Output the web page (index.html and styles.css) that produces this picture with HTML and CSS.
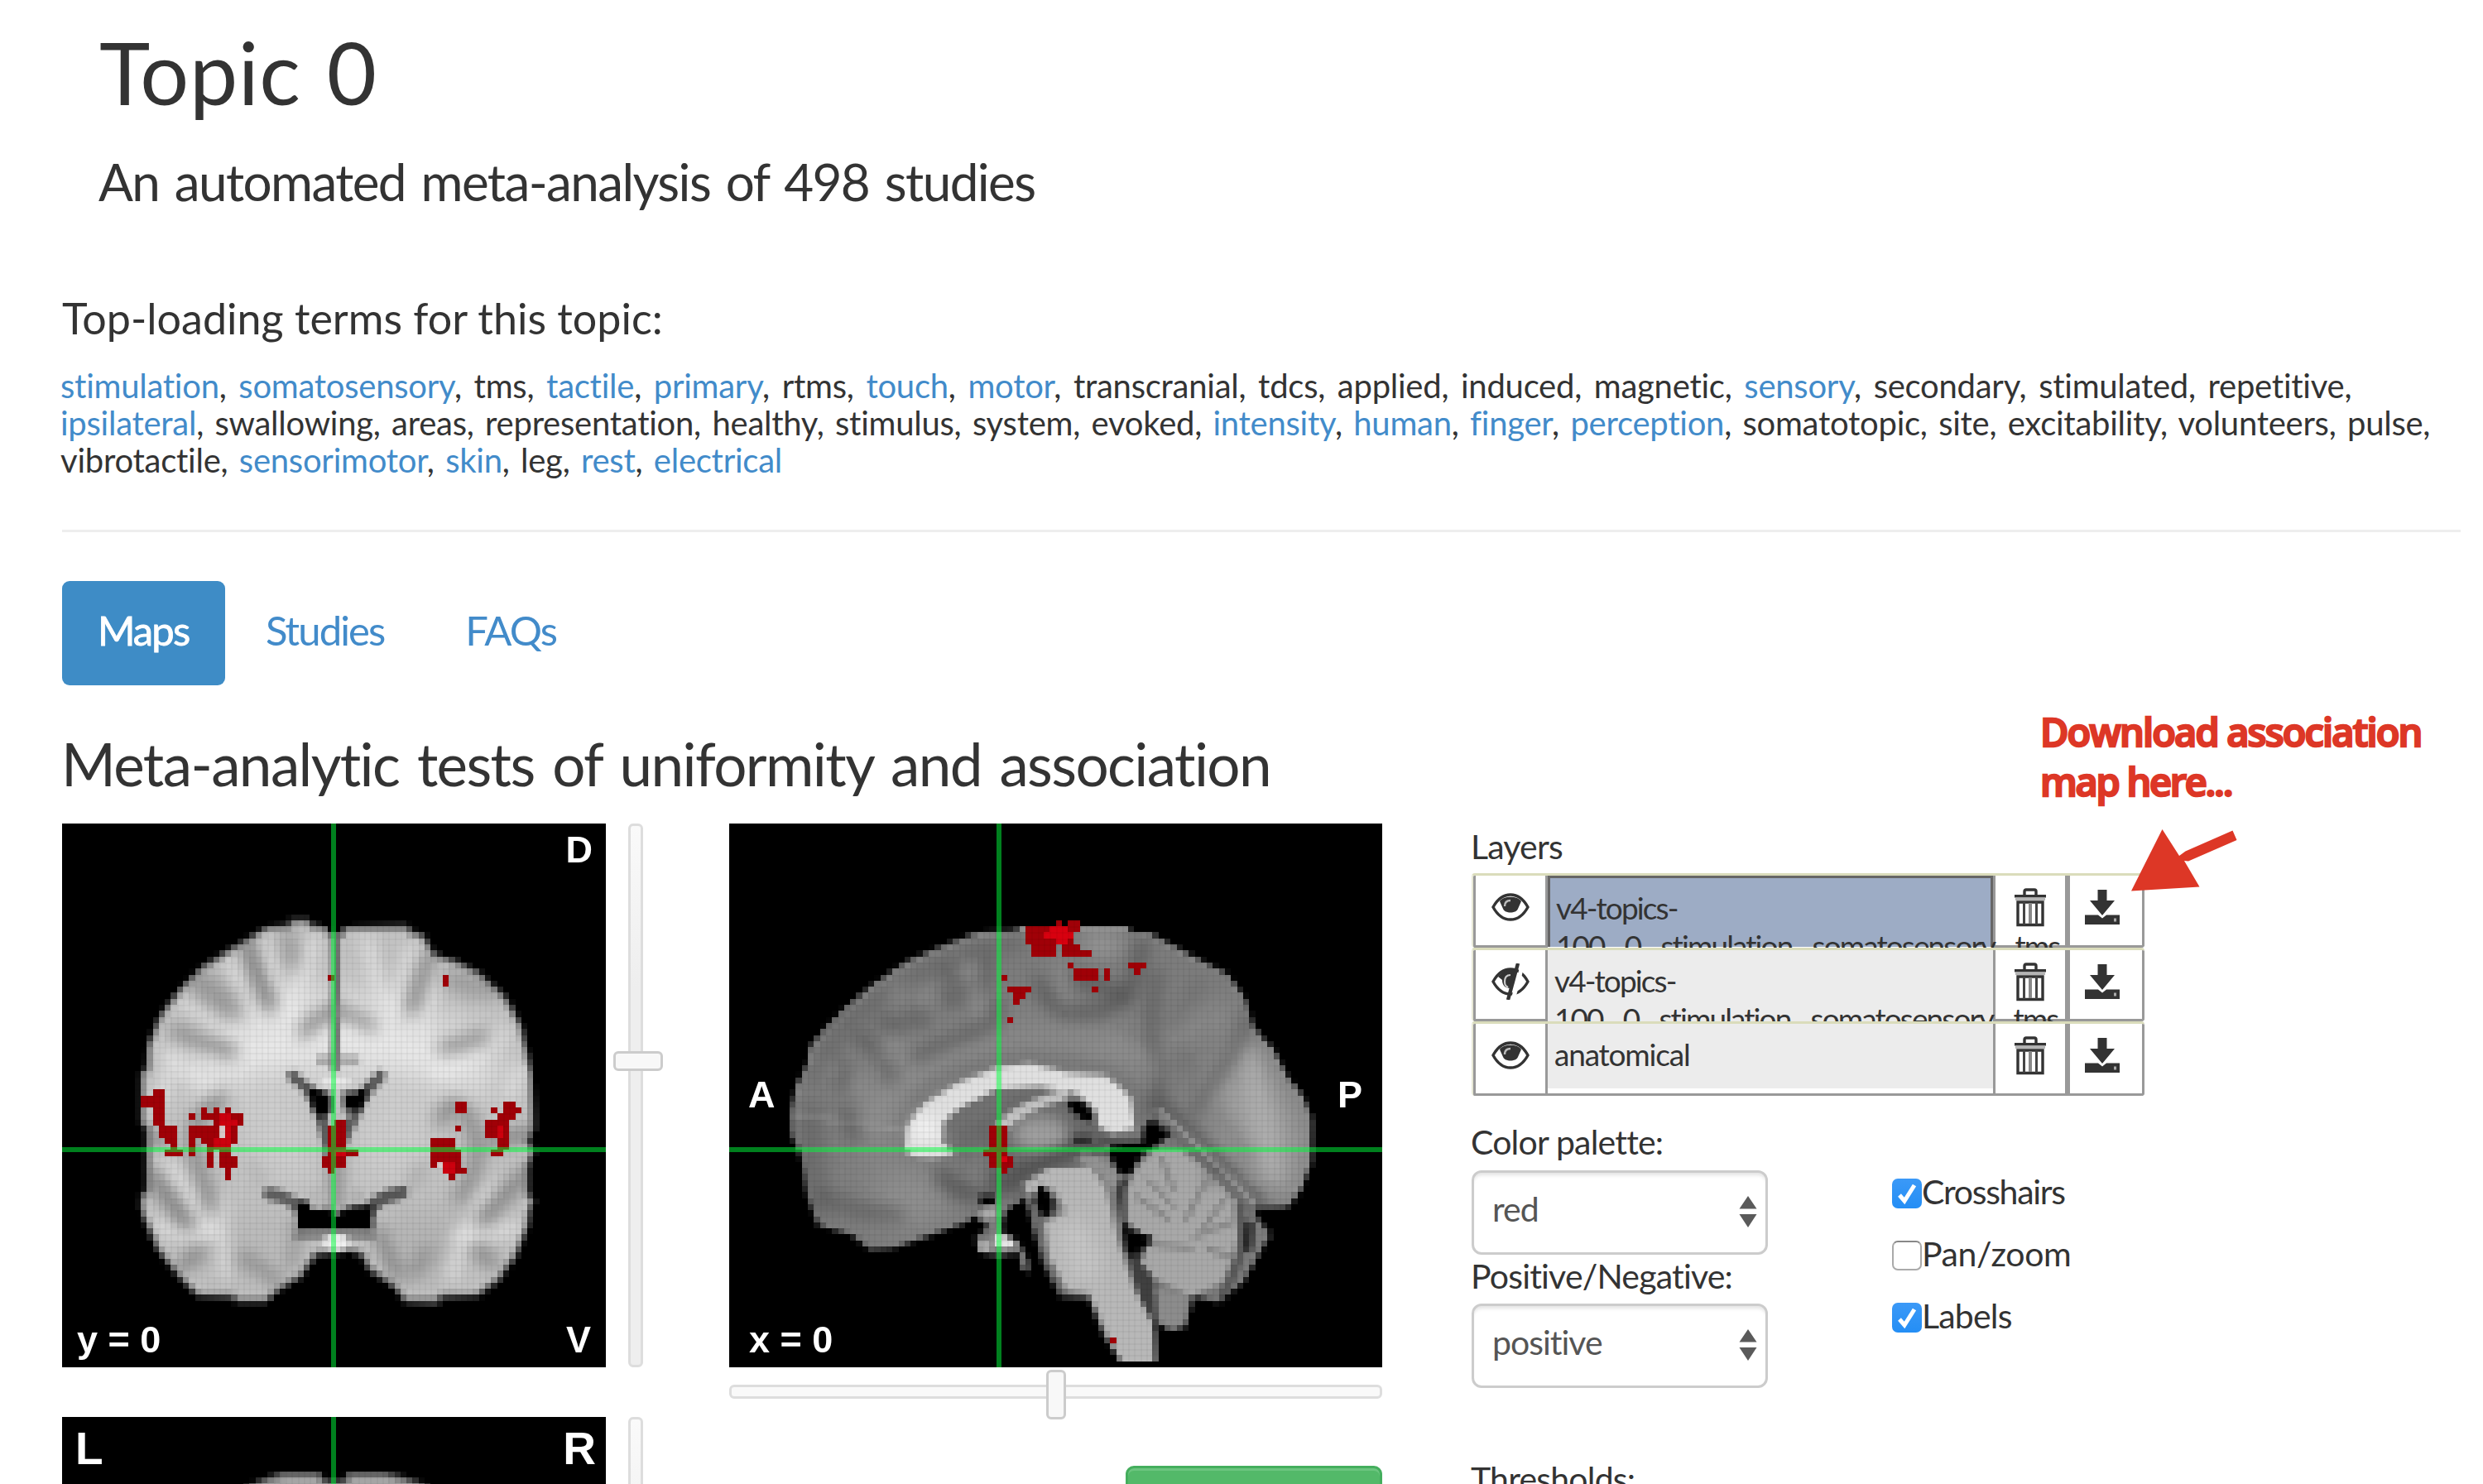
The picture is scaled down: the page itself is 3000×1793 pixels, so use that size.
FILE: index.html
```html
<!DOCTYPE html>
<html lang="en">
<head>
<meta charset="utf-8">
<title>Topic 0</title>
<link rel="stylesheet" href="styles.css">
</head>
<body>
<svg class="sprite" width="0" height="0" aria-hidden="true">
  <symbol id="eye" viewBox="0 0 46 38">
    <path d="M2 19C8 8 15 4 23 4s15 4 21 15C38 30 31 34 23 34S8 30 2 19Z" fill="#fff" stroke="#333" stroke-width="3.4"/>
    <path d="M10 12C14 5 32 5 36 12L32 21C30 27 16 27 14 21Z" fill="#333"/>
    <path d="M23 11c-5 0-7 3-7 7" fill="none" stroke="#bbb" stroke-width="2.4"/>
  </symbol>
  <symbol id="eye-off" viewBox="0 0 46 44">
    <path d="M2 22C8 11 15 7 23 7s15 4 21 15C38 33 31 37 23 37S8 33 2 22Z" fill="#fff" stroke="#333" stroke-width="3.4"/>
    <path d="M8 16C14 8 22 7 30 8L23 30C16 30 13 26 13 20Z" fill="#333"/>
    <path d="M23 14c-5 0-7 3-7 8s2 6 4 7" fill="none" stroke="#ccc" stroke-width="2.2"/>
    <path d="M38 0L26 44" stroke="#fff" stroke-width="5"/>
    <path d="M32 0L20 44" stroke="#333" stroke-width="4.4"/>
  </symbol>
  <symbol id="trash" viewBox="0 0 40 48">
    <path d="M13 10V5q0-2 2-2h10q2 0 2 2v5" fill="none" stroke="#333" stroke-width="3.4"/>
    <path d="M1 9h38v3.5H1z" fill="#333"/><path d="M2 12.500h36v3.500H2z" fill="#b5b5b5"/>
    <path d="M5 18h30v27.500H5z" fill="#fff" stroke="#333" stroke-width="3.400"/>
    <path d="M12.500 18v27M27.500 18v27" stroke="#444" stroke-width="3"/><path d="M20 19v25" stroke="#888" stroke-width="4"/>
  </symbol>
  <symbol id="download" viewBox="0 0 42 42">
    <path d="M15.500 0h11v13h9.500L21 31 6 13h9.500z" fill="#333"/>
    <path d="M0 30.500h16l5 4 5-4h16V42H0z" fill="#333"/>
    <path d="M35 34.500h3v4h-3z" fill="#aaa"/>
  </symbol>
  <symbol id="updown" viewBox="0 0 22 38">
    <path d="M11 0l10.500 15.500H.5zM11 38L.5 22h21z" fill="#5a5a5a"/>
  </symbol>
</svg>

<header class="intro">
  <h1>Topic 0</h1>
  <p class="subtitle">An automated meta-analysis of 498 studies</p>
</header>

<main>
  <section class="terms">
    <h4>Top-loading terms for this topic:</h4>
    <p class="t1"><a>stimulation</a>, <a>somatosensory</a>, tms, <a>tactile</a>, <a>primary</a>, rtms, <a>touch</a>, <a>motor</a>, transcranial, tdcs, applied, induced, magnetic, <a>sensory</a>, secondary, stimulated, repetitive,</p>
    <p class="t2"><a>ipsilateral</a>, swallowing, areas, representation, healthy, stimulus, system, evoked, <a>intensity</a>, <a>human</a>, <a>finger</a>, <a>perception</a>, somatotopic, site, excitability, volunteers, pulse,</p>
    <p class="t2">vibrotactile, <a>sensorimotor</a>, <a>skin</a>, leg, <a>rest</a>, <a>electrical</a></p>
  </section>
  <hr>
  <nav class="tabs">
    <a class="active">Maps</a><a>Studies</a><a>FAQs</a>
  </nav>
  <h2>Meta-analytic tests of uniformity and association</h2>

  <div class="viewer">
    <div class="col-left">
      <div class="slice-row">
        <div class="slice"><canvas id="coronal" width="657" height="657"></canvas>
          <span class="lbl tr">D</span><span class="lbl bl">y = 0</span><span class="lbl br">V</span></div>
        <div class="slider-v"><i></i></div>
      </div>
      <div class="slice-row cut">
        <div class="slice"><canvas id="axial" width="657" height="657"></canvas>
          <span class="lbl big tl">L</span><span class="lbl big tr">R</span></div>
        <div class="slider-v"></div>
      </div>
    </div>

    <div class="col-mid">
      <div class="slice"><canvas id="sagittal" width="789" height="657"></canvas>
        <span class="lbl ml">A</span><span class="lbl mr">P</span><span class="lbl bl">x = 0</span></div>
      <div class="slider-h"><i></i></div>
      <div class="green-btn"></div>
    </div>

    <aside class="controls">
      <div class="field-label">Layers</div>
      <ul class="layers">
        <li class="selected">
          <button><svg class="i-eye"><use href="#eye"/></svg></button>
          <div class="name">v4-topics-<br>100<u>_</u>0<u>_</u>stimulation<u>_</u>somatosensory<u>_</u>tms</div>
          <button><svg class="i-trash"><use href="#trash"/></svg></button>
          <button><svg class="i-down"><use href="#download"/></svg></button>
        </li>
        <li>
          <button><svg class="i-off"><use href="#eye-off"/></svg></button>
          <div class="name">v4-topics-<br>100<u>_</u>0<u>_</u>stimulation<u>_</u>somatosensory<u>_</u>tms</div>
          <button><svg class="i-trash"><use href="#trash"/></svg></button>
          <button><svg class="i-down"><use href="#download"/></svg></button>
        </li>
        <li class="short">
          <button><svg class="i-eye"><use href="#eye"/></svg></button>
          <div class="name">anatomical</div>
          <button><svg class="i-trash"><use href="#trash"/></svg></button>
          <button><svg class="i-down"><use href="#download"/></svg></button>
        </li>
      </ul>
      <div class="options">
        <div class="selects">
          <div class="field-label palette">Color palette:</div>
          <div class="select"><span>red</span><svg><use href="#updown"/></svg></div>
          <div class="field-label sign">Positive/Negative:</div>
          <div class="select"><span>positive</span><svg><use href="#updown"/></svg></div>
        </div>
        <div class="checks">
          <label class="on"><b><svg viewBox="0 0 36 36"><path d="M9 20l6 7L27 8"/></svg></b><span class="w1">Crosshairs</span></label>
          <label><b></b><span class="w2">Pan/zoom</span></label>
          <label class="on"><b><svg viewBox="0 0 36 36"><path d="M9 20l6 7L27 8"/></svg></b><span class="w3">Labels</span></label>
        </div>
      </div>
      <div class="field-label thresholds">Thresholds:</div>
    </aside>
  </div>
</main>

<div class="note">
  <div>Download association</div>
  <div class="second">map here...</div>
  <svg class="arrow" viewBox="0 0 128 76"><path d="M0 74.500L37.500 0 58 32l7.500-5.500L122.500 1.500 127.500 13 69 38.500l-5-.500L82.500 69.500z" fill="#dd3726"/></svg>
</div>
<script src="brain.js"></script>
</body>
</html>
```

FILE: styles.css
```css
* { box-sizing: border-box; }
body {
  margin: 0;
  height: 1793px;
  overflow: hidden;
  position: relative;
  background: #fff;
  color: #333;
  font-family: Lato, "Open Sans", sans-serif;
}
.sprite { position: absolute; }
h1, h2, h4, p, ul { margin: 0; padding: 0; font-weight: 400; }
svg { display: block; overflow: visible; }
a { color: #428bca; }

.intro { padding: 27px 0 0 120px; white-space: nowrap; }
h1 { font-size: 104px; line-height: 120px; letter-spacing: .6px; word-spacing: 4px; }
.subtitle { margin-top: 32px; font-size: 62px; line-height: 80px; letter-spacing: -1.6px; word-spacing: 4.3px; text-indent: -1px; }

main { padding-left: 75px; white-space: nowrap; }
.terms { margin: 95px 0 0 -2px; font-size: 40px; line-height: 45px; }
h4 { font-size: 52px; line-height: 60px; margin: 0 0 30px 2px; }
.t1 { letter-spacing: -.25px; word-spacing: 4.8px; }
.t2 { letter-spacing: -.25px; word-spacing: 3.5px; }
hr { width: 2898px; height: 3px; margin: 61px 0 59px; border: 0; background: #eee; }

.tabs { display: flex; gap: 7px; height: 126px; }
.tabs a { font-size: 49px; line-height: 119px; letter-spacing: -1.9px; padding: 0 49px 7px 42px; border-radius: 9px; }
.tabs a.active { width: 197px; padding-right: 0; padding-left: 43px; color: #fff; background: #3e8cc6; -webkit-text-stroke: .8px #fff; }
h2 { margin-top: 55px; font-size: 71px; line-height: 80px; letter-spacing: -1.6px; word-spacing: 5px; text-indent: -1px; }

.viewer { display: flex; margin-top: 32px; height: 798px; overflow: hidden; }
.col-left { width: 806px; display: flex; flex-direction: column; gap: 60px; }
.slice-row { display: flex; gap: 27px; }
.slice-row.cut { height: 81px; overflow: hidden; }
.slice { position: relative; }
.slice canvas { display: block; background: #000; }
.lbl { position: absolute; color: #fff; font: bold 45px/50px "Liberation Sans", sans-serif; letter-spacing: 0; }
.lbl.big { font-size: 55px; line-height: 60px; }
.tr { top: 7px; right: 16px; }
.big.tr { top: 8px; right: 12px; }
.tl { top: 8px; left: 16px; }
.bl { bottom: 8px; left: 18px; }
.col-mid .bl { left: 24px; }
.br { bottom: 8px; right: 18px; }
.ml { top: 303px; left: 23px; }
.mr { top: 303px; right: 24px; }
.slider-v { flex: none; width: 18px; height: 657px; display: flex; justify-content: center; align-items: flex-start; border: 3px solid #ddd; border-radius: 6px; background: linear-gradient(#fafafa, #eee 30%); }
.slider-v i { flex: none; width: 60px; height: 24px; margin: 272px -6px 0 0; }
.slider-h { margin-top: 21px; height: 17px; display: flex; align-items: center; border: 3px solid #ddd; border-radius: 6px; background: #f9f9f9; }
.slider-h i { flex: none; width: 24px; height: 60px; margin: 6px 0 0 380px; }
.slider-v i, .slider-h i { border: 3px solid #ccc; border-radius: 6px; background: #f8f8f8; }
.col-mid { width: 789px; }
.green-btn { width: 310px; height: 70px; margin: 81px 0 0 auto; border: 3px solid #44ae5d; border-radius: 10px; background: #53b969; box-shadow: inset 0 3px #6cc57f; }

.controls { margin-left: 108px; width: 814px; padding-top: 3px; }
.field-label { font-size: 41px; line-height: 50px; letter-spacing: -.8px; text-indent: -1px; }
.layers { list-style: none; width: 813px; margin-top: 7px; }
.layers li { height: 89.700px; display: grid; grid-template-columns: 90px 538px 90px 93px; border-top: 3px solid #dadcbb; border-left: 2px solid #e8e9d6; border-radius: 4px; overflow: hidden; }
.layers .short { background: linear-gradient(#999, #999) bottom / 100% 3px no-repeat; }
.layers button { display: grid; place-items: center; margin: 0; padding: 0 0 8px; border: solid #999; border-width: 0 3px 3px; background: #fff; }
.layers .name { position: relative; padding: 14px 0 0 8px; font-size: 37px; line-height: 46px; letter-spacing: -1.9px; background: #ececec; overflow: visible; }
.layers .short .name { height: 78px; letter-spacing: -1.2px; }
.layers li:not(.short) .name { height: 86px; z-index: 0; }
.layers .selected .name { background: #9dacc5; border: solid #666; border-width: 3px 3px 0; padding: 13px 0 0 7px; }
.name u { text-decoration: none; padding: 0 5px 0 4px; }
.i-eye { width: 46px; height: 38px; margin-right: 1px; }
.i-off { width: 46px; height: 44px; margin-right: 1px; }
.i-trash { width: 40px; height: 48px; }
.i-down { width: 42px; height: 42px; margin-right: 9px; }

.options { display: flex; }
.selects { width: 508px; }
.palette { margin-top: 31px; }
.select { width: 358px; height: 102px; display: flex; justify-content: space-between; align-items: center; padding: 0 9px 2px 22px; border: 3px solid #ccc; border-radius: 12px; box-shadow: inset 0 5px 4px -2px #e4e4e4; font-size: 41px; letter-spacing: -1px; color: #555; }
.select span { padding-bottom: 7px; }
.select svg { width: 24px; height: 38px; }
.palette + .select { margin-top: 9px; }
.sign { margin: 1px 0 8px; }
.checks { padding-top: 91px; display: flex; flex-direction: column; gap: 25px; }
.checks label { display: flex; align-items: center; height: 50px; font-size: 41px; line-height: 46px; }
.checks b { width: 36px; height: 36px; margin-top: 4px; border: 2px solid #aaa; border-top-color: #888; border-radius: 7px; background: #fff; }
.checks .on b { border: 0; background: linear-gradient(#3b99f7, #248ef5); }
.checks path { fill: none; stroke: #fff; stroke-width: 5; }
.w1 { letter-spacing: -1.3px; }
.w2 { letter-spacing: -.4px; }
.w3 { letter-spacing: -.8px; }
.thresholds { margin-top: 85px; }

.note { position: absolute; left: 2465px; top: 854px; color: #dd3726; font: 600 47px/60px "Open Sans", sans-serif; letter-spacing: -1.850px; -webkit-text-stroke: 2.400px #dd3726; white-space: nowrap; }
.note .second { letter-spacing: -2.300px; }
.arrow { position: absolute; left: 110px; top: 148px; width: 128px; height: 76px; }
```

FILE: brain.js
```js
// Each slice is painted on a small voxel canvas, then enlarged without smoothing.
function slice(id, cols, rows, sx, sy, ox, oy, crossX, crossY, paint) {
  const out = document.getElementById(id), octx = out.getContext('2d');
  const v = document.createElement('canvas');
  v.width = cols; v.height = rows;
  const c = v.getContext('2d');
  c.setTransform(1 / sx, 0, 0, 1 / sy, -ox / sx, -oy / sy);
  c.lineJoin = c.lineCap = 'round';
  const gray = g => Array.isArray(g) ? `rgba(${g[0]},${g[0]},${g[0]},${g[1]})` : `rgb(${g},${g},${g})`;
  const trace = p => {
    c.beginPath();
    for (let i = 0; i < p.length; i += 2) c.lineTo(p[i], p[i + 1]);
  };
  const api = {
    fill(p, g, blur = 0) { c.filter = blur ? `blur(${blur}px)` : 'none'; trace(p); c.closePath(); c.fillStyle = gray(g); c.fill(); },
    line(p, w, g, blur = 0.9) {
      c.filter = blur ? `blur(${blur}px)` : 'none';
      c.beginPath(); c.moveTo(p[0], p[1]);
      if (p.length === 4) c.lineTo(p[2], p[3]);
      for (let i = 2; i < p.length - 2; i += 2) {
        const last = i + 4 >= p.length;
        c.quadraticCurveTo(p[i], p[i + 1], last ? p[i + 2] : (p[i] + p[i + 2]) / 2, last ? p[i + 3] : (p[i + 1] + p[i + 3]) / 2);
      }
      c.lineWidth = w; c.strokeStyle = gray(g); c.stroke();
    },
    rim(p, w, g) { c.filter = 'blur(0.6px)'; trace(p); c.closePath(); c.lineWidth = w; c.strokeStyle = gray(g); c.stroke(); },
    dot(x, y, rx, ry, g, blur = 1) { c.filter = blur ? `blur(${blur}px)` : 'none'; c.beginPath(); c.ellipse(x, y, rx, ry, 0, 0, 7); c.fillStyle = gray(g); c.fill(); },
    inside() { c.globalCompositeOperation = 'source-atop'; },
    red(list, color) {
      c.save(); c.globalCompositeOperation = 'source-over'; c.filter = 'none'; c.resetTransform(); c.fillStyle = color;
      for (const [a, b, d, e] of list) {
        const x = Math.round((a - ox) / sx), y = Math.round((b - oy) / sy);
        c.fillRect(x, y, Math.max(1, Math.round((d - ox) / sx) - x), Math.max(1, Math.round((e - oy) / sy) - y));
      }
      c.restore();
    }
  };
  if (paint) paint(api);
  octx.fillStyle = '#000'; octx.fillRect(0, 0, out.width, out.height);
  octx.imageSmoothingEnabled = false;
  octx.drawImage(v, 0, 0, out.width, 657);
  octx.fillStyle = 'rgba(0,0,0,.035)';
  const s = out.width / cols;
  for (let i = 0; i < cols; i++) octx.fillRect(Math.round(i * s), 0, 2, 657);
  for (let i = 0; i < rows; i++) octx.fillRect(0, Math.round(i * 7.3), out.width, 2);
  octx.fillStyle = 'rgba(0,255,60,.5)';
  octx.fillRect(crossX, 0, 6, 657);
  if (crossY) { octx.fillRect(0, crossY, crossX, 6); octx.fillRect(crossX + 6, crossY, out.width, 6); }
}

slice('coronal', 90, 90, 15.06, 14.08, 31, 29, 325, 391, b => {
  const o = [598,250,648,252,655,265,690,268,697,282,728,282,732,268,890,265,905,280,935,290,960,330,1010,345,1070,375,1140,435,1178,500,1190,550,1205,610,1210,740,1195,770,1210,790,1195,830,1195,890,1210,905,1200,930,1195,970,1165,1035,1120,1095,1070,1130,975,1135,970,1147,885,1145,850,1105,795,1070,775,1035,750,1030,665,1035,630,1085,570,1120,540,1145,465,1145,455,1133,365,1132,320,1085,265,1020,240,965,225,930,225,895,240,885,240,740,225,730,225,610,240,600,242,545,270,480,320,415,380,360,440,325,510,285,540,268,598,265];
  b.fill(o, 194); b.inside();
  // white matter
  b.fill([330,560,420,500,560,470,600,380,680,440,800,430,880,470,1000,500,1100,520,1120,640,1000,660,900,640,840,620,700,600,560,630,440,650,340,640], [236,.95], 3);
  b.fill([480,640,600,620,660,740,650,860,540,850,480,800], [206,.9], 2);
  b.fill([820,620,960,640,950,780,900,860,790,860,750,760], [206,.9], 2);
  b.fill([370,960,560,930,600,960,560,1080,480,1130,400,1090], [184,.8], 2);
  b.fill([820,940,1000,920,1050,960,990,1080,900,1120,850,1050], [178,.8], 2);
  for (const l of [[655,300,640,380,600,460],[530,310,560,400,590,480],[450,350,480,420,520,500],[330,440,400,480,480,520],[290,560,320,600,400,640],[790,300,810,400,850,480],[900,320,880,390,860,460],[960,360,960,430,920,500],[1130,520,1050,580,960,600],[1170,600,1150,660],[290,820,360,900,400,980],[420,900,430,1000,440,1080],[1000,1080,1030,980,1100,880],[270,960,340,1000,400,980],[1160,970,1080,990,1010,990],[300,600,270,680]])
    b.line(l, 26, [240,.75], 1);
  b.rim(o, 22, [95,.8]);
  // sulci
  b.line([490,300,510,370,550,450], 30, [100,.8]);
  b.line([595,290,605,350], 34, [140,.7]);
  b.line([950,340,920,400,905,460], 30, [120,.8]);
  b.line([1000,390,1060,420,1110,410], 44, [140,.8], 1.4);
  b.line([360,390,410,420,450,460], 54, [140,.85], 1.5);
  b.line([320,515,380,540,450,560], 40, [140,.85], 1.2);
  b.line([985,550,1030,545,1080,525], 42, [150,.85], 1.3);
  b.line([712,280,716,400,712,600], 20, [95,.85], .6);
  b.line([635,515,650,480,712,465], 34, [135,.85]);
  b.line([800,500,780,480,715,465], 30, [135,.85]);
  b.line([670,580,715,578,765,580], 14, [120,.8], .6);
  b.line([975,720,985,680,1040,690,1070,780,1060,850,1020,900], 32, [120,.75], 1);
  b.line([430,670,380,700,345,760,380,850,405,920], 30, [115,.75], 1);
  b.line([255,850,290,890,340,960], 36, [120,.85]);
  b.line([1190,840,1130,900,1080,950], 36, [125,.85]);
  b.line([235,765,290,765], 22, [100,.8]);
  b.line([1205,750,1100,770], 26, [100,.8]);
  b.line([330,1060,370,1030], 38, [130,.8], 1.2);
  b.line([480,1040,540,1060,570,1100], 32, [130,.7], 1.2);
  b.line([1100,1050,1070,1025], 38, [130,.8], 1.2);
  b.line([940,1030,910,1070], 36, [140,.8], 1.2);
  b.line([600,1060,625,1000,610,960], 22, [130,.8]);
  b.line([820,980,840,1040,870,1080], 26, [110,.8]);
  b.line([500,820,530,860], 18, [170,.8]);
  b.line([930,830,900,870], 18, [150,.8]);
  // ventricles and cistern
  b.line([605,618,650,645,680,720,700,800], 26, [80,.9], .6);
  b.line([825,618,790,645,755,720,735,760], 26, [80,.9], .6);
  b.line([715,740,712,920], 24, [110,.85]);
  b.line([545,890,610,900,620,925], 28, [85,.9], .7);
  b.line([880,888,815,900,800,925], 28, [75,.9], .7);
  b.dot(712, 630, 40, 12, [235,.9], .6);
  b.fill([645,642,688,655,702,660,702,700,688,712,668,712,655,690], 0);
  b.fill([732,655,760,655,790,642,790,665,775,698,735,698], 0);
  b.dot(665, 900, 22, 20, [185,.9], .6); b.dot(765, 900, 22, 20, [180,.9], .6);
  b.fill([617,908,645,908,655,930,700,925,715,940,735,925,765,920,805,918,805,977,617,977], 0);
  b.line([615,988,805,988], 14, [95,.9], .4);
  b.dot(714, 1005, 34, 20, 240, .7);
  b.red([[252,655,288,669],[225,669,288,685],[252,685,285,712],[263,712,288,740],[278,727,318,755],[285,755,300,770],[285,755,315,768],[300,768,315,783],[285,783,330,797],[343,698,360,713],[372,685,390,713],[402,685,420,713],[433,685,450,700],[388,698,480,713],[402,712,480,740],[388,727,402,740],[343,740,466,755],[343,755,360,797],[372,755,466,768],[388,768,450,783],[388,783,404,812],[420,783,450,797],[420,797,466,826],[388,821,404,838],[433,826,450,838],[433,848,450,865],[716,712,732,740],[701,740,732,755],[701,755,746,783],[701,783,762,797],[686,797,746,811],[686,811,732,825],[701,825,716,838],[701,375,716,392],[985,375,1002,408],[1017,683,1047,698],[1017,727,1032,740],[1137,670,1167,685],[1107,685,1122,700],[1137,685,1180,700],[1122,698,1167,713],[1092,712,1152,727],[1107,727,1152,740],[1092,740,1152,755],[1122,755,1152,783],[1107,783,1137,797],[956,768,1017,783],[956,783,1032,797],[956,797,1032,825],[986,825,1047,838],[986,838,1047,850],[1002,850,1017,865]], '#a00007');
  b.red([[418,700,448,735],[448,712,466,727],[404,755,448,783],[986,811,1017,850],[1122,727,1137,755],[716,783,732,797],[433,740,448,755]], '#cd000e');
  b.red([[420,740,433,755],[971,811,986,825]], '#d8c8c8');
});

slice('sagittal', 108, 90, 13.64, 14.08, 39, 29, 323, 391, b => {
  const o = [690,268,940,268,945,282,985,282,1060,325,1165,380,1205,440,1220,500,1265,555,1300,620,1335,665,1353,715,1352,820,1330,880,1300,922,1225,925,1228,945,1260,985,1230,1040,1200,1095,1145,1145,1085,1130,1070,1200,1035,1212,1000,1190,1002,1283,920,1283,880,1215,850,1135,785,1130,745,1050,720,960,700,900,690,915,665,930,655,985,690,1000,715,1050,715,1075,700,1070,690,1030,650,1035,600,1030,595,995,625,970,600,950,595,940,575,960,500,985,410,1018,355,1020,320,990,240,965,215,900,200,800,178,750,178,705,190,640,215,590,220,550,250,510,300,460,370,400,440,350,530,310,600,283,690,280];
  b.fill(o, 124); b.inside();
  b.fill([400,560,640,500,860,490,990,560,990,680,900,600,700,570,520,620,430,720,400,840,330,820,340,650], [148,.8], 3);
  b.fill([1120,640,1210,540,1290,640,1340,760,1320,880,1260,900,1160,800], [168,.9], 3);
  b.fill([340,860,460,820,560,880,520,960,400,980], [148,.8], 2.5);
  b.line([1210,560,1240,700,1270,860], 36, [182,.8], 1.6);
  b.line([1020,560,1100,470,1170,480], 60, [145,.7], 2);
  b.rim([178,705,190,640,215,590,220,550,250,510,300,460,370,400,440,350,530,310,600,283,690,275,940,268,985,282,1060,325,1165,380,1205,440,1220,500,1265,555,1300,620,1335,665,1353,715,1352,820,1330,880], 14, [150,.8]);
  // medial sulci
  b.line([230,620,260,540,340,460,460,380,600,320,690,310], 24, [92,.65], 1.2);
  b.line([240,930,215,820,225,700], 40, [92,.7], 1.6);
  for (const l of [[330,520,370,560],[380,490,430,500],[450,480,480,490],[460,570,540,530,620,500],[520,430,560,440],[530,370,550,400],[620,340,620,400],[280,580,300,640],[390,590,405,620],[640,450,640,490],[300,700,320,760],[250,900,330,940,420,940]])
    b.line(l, 30, [84,.65], 1.3);
  for (const [x, y] of [[420,420],[580,370],[410,550],[490,430],[270,600],[330,640],[370,690],[600,450]])
    b.dot(x, y, 22, 22, [150,.6], 1.3);
  b.line([740,400,760,460,850,475,930,440,950,400,970,310], 30, [84,.75], 1.2);
  b.line([820,390,880,410,930,430], 34, [84,.75], 1.3);
  b.dot(880, 310, 50, 30, [155,.8], 1.4);
  b.line([780,350,800,440], 28, [142,.75], 1.2);
  b.line([1000,380,985,520,1010,600,1010,680], 26, [88,.7], 1.2);
  b.line([1205,470,1190,560,1120,630,1090,700], 20, [88,.75], 1);
  b.line([1060,560,1060,600], 30, [95,.6], 1.4);
  b.line([1040,500,1100,400], 22, [105,.6], 1.2);
  b.line([880,540,960,540,1000,610], 22, [150,.6], 1);
  b.line([1125,690,1180,740,1210,810], 20, [118,.6], 1.2);
  b.line([430,740,460,650,560,600,700,570,860,590,960,640,985,740], 14, [95,.7], .8);
  b.line([520,850,560,910,640,880], 40, [80,.75], 1.3);
  b.line([1000,680,1100,780,1230,920], 40, [85,.85], .9);
  b.line([1010,700,1100,780,1220,910], 15, [150,.9], .5);
  // deep structures
  b.fill([520,740,560,690,640,650,760,640,880,690,900,760,860,800,720,830,660,880,600,860,560,800], [105,.95], .8);
  b.line([540,750,570,710,660,670], 26, [118,1], .8);
  b.dot(740, 750, 62, 42, [160,.95], 1);
  b.line([655,735,690,690,790,660], 26, [205,.9], .7);
  b.fill([435,790,440,735,480,680,560,630,650,595,720,590,800,610,890,618,945,665,955,740,900,750,872,735,862,690,820,655,740,642,640,650,560,690,520,725,518,770,550,795,500,808,455,805], 224, .6);
  b.dot(480, 740, 28, 30, [245,.9], 1);
  b.line([600,800,610,870], 26, [140,.9], 1);
  b.line([690,850,800,790,880,780], 34, [70,.9], .9);
  b.line([640,860,700,870], 40, [85,.9], .9);
  b.line([840,810,890,820,910,870], 30, [150,.9], .7);
  b.fill([895,800,900,780,970,770,975,735,995,715,1010,735,1040,748,1000,782,970,800,945,850,920,850], 0);
  b.fill([800,675,835,675,860,705,860,722,835,718,812,698], 0);
  b.line([820,765,850,765], 12, 20, 0);
  b.line([880,770,960,765], 14, [75,.9], .5);
  // brainstem
  b.line([930,880,960,1050,1000,1190], 42, [60,.95], .7);
  b.line([725,900,745,1030,790,1120], 40, [100,.9], .8);
  b.fill([700,870,760,830,855,830,890,880,915,1000,955,1120,1000,1200,1005,1285,920,1285,880,1190,850,1125,800,1118,760,1040,750,960,800,935,770,880,715,895], 184, .6);
  b.fill([770,960,840,950,880,1040,870,1100,810,1090], [200,.8], 1.5);
  b.fill([735,872,755,880,772,912,765,945,740,940,730,910], 0, .3);
  b.fill([660,945,690,915,708,905,718,960,725,1010,700,1000,680,985,658,975], 0);
  b.fill([600,900,635,895,640,915,610,925], 0, .3);
  b.dot(660, 1000, 25, 18, 230, .5); b.dot(615, 1015, 18, 14, 175, .5); b.dot(625, 935, 22, 16, 170, .5);
  // cerebellum
  b.fill([935,880,960,830,1000,790,1060,790,1130,850,1190,920,1195,1000,1150,1100,1080,1130,1000,1090,965,1050,990,1000,935,960], 168, .6);
  b.fill([1000,1110,1075,1130,1065,1195,1035,1208,1005,1190], [140,1], .7);
  for (const l of [[960,900,1030,950],[985,860,1040,920],[1015,810,1040,880],[1110,870,1070,950],[1160,900,1110,970],[1170,960,1090,990],[1000,1010,1080,1020],[1120,1020,1170,1040]])
    b.line(l, 13, [105,.5], .7);
  b.dot(1130, 850, 18, 18, [80,.7], .8);
  b.line([1190,920,1200,1000,1180,1080,1150,1130], 20, [85,.9], .6);
  b.line([1212,960,1210,1020], 14, 0, .3);
  b.fill([925,955,945,980,995,992,995,1003,965,1020,955,1040,935,1030], 0, .3);
  b.red([[770,252,785,266],[798,252,827,280],[702,266,745,308],[745,266,812,308],[715,308,742,336],[755,308,770,336],[785,308,827,336],[827,320,853,336],[798,350,812,364],[823,364,866,394],[878,364,893,394],[934,350,974,364],[948,364,960,378],[852,406,866,420],[652,378,665,392],[662,406,718,420],[676,420,704,434],[676,434,690,448],[662,477,678,491],[620,740,664,783],[610,783,664,797],[620,797,676,825],[650,825,664,838],[892,1230,908,1243]], '#a00007');
  b.red([[758,266,800,280],[745,280,812,294],[772,294,798,308],[650,797,664,811]], '#d8000f');
});

slice('axial', 90, 90, 15.06, 14.08, 31, 1412, 325, 0, b => {
  const o = [420,1620,505,1566,540,1552,580,1540,670,1537,690,1560,730,1560,745,1540,835,1537,890,1552,930,1566,1010,1620];
  b.fill(o, 165); b.inside();
  b.rim(o, 26, [85,.8]);
});
```
